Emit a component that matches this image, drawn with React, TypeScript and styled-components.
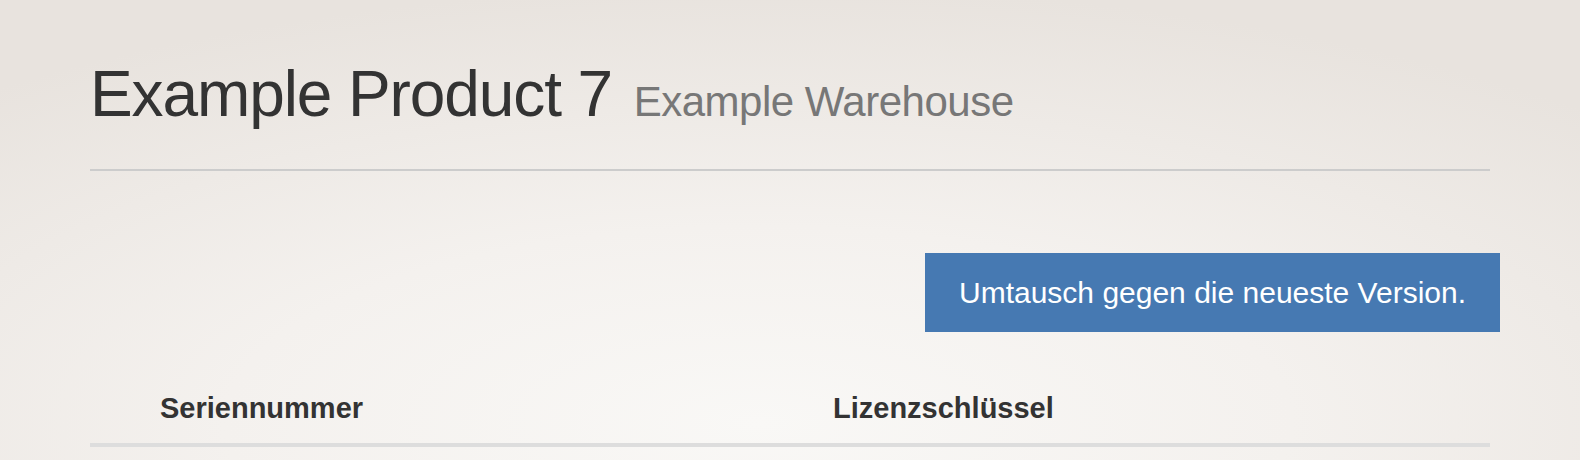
import React from "react";
import styled, { createGlobalStyle } from "styled-components";

const GlobalStyle = createGlobalStyle`
  html, body {
    margin: 0;
    padding: 0;
  }

  body {
    font-family: "Liberation Sans", Arial, sans-serif;
    color: #333;
  }
`;

const columns = ["Seriennummer", "Lizenzschlüssel"];

const App: React.FC = () => {
  return (
    <Page>
      <GlobalStyle />
      <Container>
        <Header>
          <Title>
            Example Product 7 <small>Example Warehouse</small>
          </Title>
        </Header>

        <Actions>
          <ExchangeButton type="button">
            Umtausch gegen die neueste Version.
          </ExchangeButton>
        </Actions>

        <Table>
          <thead>
            <HeadRow>
              {columns.map((label) => (
                <HeadCell key={label}>{label}</HeadCell>
              ))}
            </HeadRow>
          </thead>
        </Table>
      </Container>
    </Page>
  );
};

const Page = styled.div`
  min-height: 460px;
  background: radial-gradient(
    ellipse 75% 95% at 48% 92%,
    #f9f8f6 0%,
    #f4f1ee 45%,
    #e8e3de 100%
  );
  overflow: hidden;
`;

const Container = styled.div`
  width: 1400px;
  margin: 0 auto;
`;

const Header = styled.div`
  padding: 58px 0 31px;
  border-bottom: 2px solid #cccccc;
`;

const Title = styled.h1`
  margin: 0;
  font-size: 64px;
  line-height: 72px;
  font-weight: 400;
  letter-spacing: -1.1px;
  color: #333;
  white-space: nowrap;

  small {
    margin-left: 5px;
    font-size: 42px;
    letter-spacing: -0.5px;
    color: #777;
  }
`;

const Actions = styled.div`
  display: flex;
  justify-content: flex-end;
  margin: 82px -10px 56px 0;
`;

const ExchangeButton = styled.button`
  display: flex;
  align-items: center;
  justify-content: center;
  width: 575px;
  height: 79px;
  padding: 0 33px;
  border: none;
  border-radius: 0;
  background: #4679b2;
  color: #fff;
  font-family: "Liberation Sans", Arial, sans-serif;
  font-size: 30px;
  cursor: pointer;
`;

const Table = styled.table`
  width: 100%;
  border-collapse: collapse;
  table-layout: fixed;
`;

const HeadRow = styled.tr`
  border-bottom: 4px solid #dddddd;
`;

const HeadCell = styled.th`
  padding: 0 70px 15px;
  text-align: left;
  font-size: 29px;
  line-height: 40px;
  font-weight: 700;
  color: #333;

  &:first-child {
    width: 533px;
  }
`;

export default App;
